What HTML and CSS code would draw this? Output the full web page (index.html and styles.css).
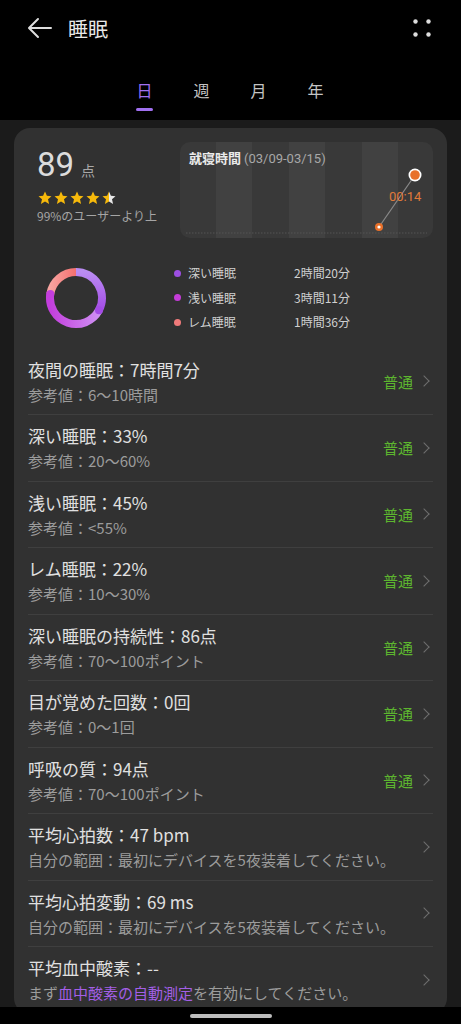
FILE: index.html
```html
<!DOCTYPE html>
<html>
<head>
    <meta name="viewport" content="width=device-width, initial-scale=1.0">
    <link rel="stylesheet" href="styles.css">
</head>
<body>
    <!-- Top bar -->
    <div class="topbar">
        <svg class="back" width="26" height="22" viewBox="0 0 26 22">
            <path d="M24 11H3M11 2L2 11l9 9" fill="none" stroke="#ddd" stroke-width="2" stroke-linecap="round" stroke-linejoin="round"/>
        </svg>
        <div class="title">睡眠</div>
        <svg class="more" width="18" height="18" viewBox="0 0 18 18">
            <circle cx="2.5" cy="2.5" r="2.2" fill="#ddd"/>
            <circle cx="15.5" cy="2.5" r="2.2" fill="#ddd"/>
            <circle cx="2.5" cy="15.5" r="2.2" fill="#ddd"/>
            <circle cx="15.5" cy="15.5" r="2.2" fill="#ddd"/>
        </svg>
    </div>

    <div class="tabs">
        <div class="tab active">日</div>
        <div class="tab">週</div>
        <div class="tab">月</div>
        <div class="tab">年</div>
    </div>

    <div class="page">
        <div class="card">
            <div class="summary">
                <div class="score">
                    <div class="score-num">89<span class="score-unit">点</span></div>
                    <svg class="stars" width="80" height="15" viewBox="0 0 80 15">
                        <defs>
                            <linearGradient id="half">
                                <stop offset="50%" stop-color="#f6b90b"/>
                                <stop offset="50%" stop-color="#e8e8e8"/>
                            </linearGradient>
                            <path id="star" d="M7 0.5l1.9 4.3 4.6 0.4-3.5 3.1 1.1 4.6L7 10.5l-4.1 2.4 1.1-4.6L0.5 5.2l4.6-0.4z"/>
                        </defs>
                        <use href="#star" x="0" fill="#f6b90b"/>
                        <use href="#star" x="16" fill="#f6b90b"/>
                        <use href="#star" x="32" fill="#f6b90b"/>
                        <use href="#star" x="48" fill="#f6b90b"/>
                        <use href="#star" x="64" fill="url(#half)"/>
                    </svg>
                    <div class="rank">99%のユーザーより上</div>
                </div>
                <div class="bedtime">
                    <svg class="bedtime-chart" width="253" height="96" viewBox="0 0 253 96">
                        <rect x="36" y="0" width="36" height="96" fill="#414141"/>
                        <rect x="109" y="0" width="36" height="96" fill="#414141"/>
                        <rect x="182" y="0" width="36" height="96" fill="#414141"/>
                        <line x1="6" y1="91" x2="247" y2="91" stroke="#555" stroke-width="1" stroke-dasharray="1.5 1.5"/>
                        <line x1="199" y1="85" x2="235" y2="33" stroke="#8a8a8a" stroke-width="1.2"/>
                        <circle cx="199" cy="85" r="4" fill="#e8702a"/>
                        <circle cx="199" cy="85" r="1.6" fill="#fff"/>
                        <circle cx="235" cy="33" r="6.5" fill="#fff"/>
                        <circle cx="235" cy="33" r="4.8" fill="#e8702a"/>
                    </svg>
                    <div class="bedtime-title">就寝時間 <span>(03/09-03/15)</span></div>
                    <div class="bedtime-time">00:14</div>
                </div>
            </div>

            <div class="stages">
                <svg class="donut" width="62" height="62" viewBox="0 0 62 62">
                    <defs>
                        <linearGradient id="gDeep" x1="0" y1="0" x2="0" y2="1">
                            <stop offset="0" stop-color="#ba8cf3"/>
                            <stop offset="1" stop-color="#a44ce6"/>
                        </linearGradient>
                        <linearGradient id="gLight" x1="1" y1="0" x2="0" y2="0">
                            <stop offset="0" stop-color="#cf90f3"/>
                            <stop offset="1" stop-color="#c33edd"/>
                        </linearGradient>
                        <linearGradient id="gRem" x1="0" y1="0" x2="1" y2="0">
                            <stop offset="0" stop-color="#f8a4a0"/>
                            <stop offset="1" stop-color="#f47070"/>
                        </linearGradient>
                    </defs>
                    <g fill="none" stroke-width="8">
                        <path d="M5.31 26.93A26 26 0 0 1 31 5" stroke="url(#gRem)"/>
                        <path d="M53.96 43.2A26 26 0 0 1 5.31 26.93" stroke="url(#gLight)"/>
                        <circle cx="5.31" cy="26.93" r="4" fill="#c33edd" stroke="none"/>
                        <path d="M31 5A26 26 0 0 1 53.96 43.2" stroke="url(#gDeep)"/>
                        <circle cx="53.96" cy="43.2" r="4" fill="#a44ce6" stroke="none"/>
                    </g>
                </svg>
                <div class="legend">
                    <div class="legend-row"><span class="dot deep"></span><span class="legend-name">深い睡眠</span><span>2時間20分</span></div>
                    <div class="legend-row"><span class="dot light"></span><span class="legend-name">浅い睡眠</span><span>3時間11分</span></div>
                    <div class="legend-row"><span class="dot rem"></span><span class="legend-name">レム睡眠</span><span>1時間36分</span></div>
                </div>
            </div>

            <div class="list">
                <div class="item">
                    <div class="item-text">
                        <div class="item-title">夜間の睡眠：7時間7分</div>
                        <div class="item-sub">参考値：6～10時間</div>
                    </div>
                    <span class="status">普通</span>
                    <span class="chev"></span>
                </div>
                <div class="item">
                    <div class="item-text">
                        <div class="item-title">深い睡眠：33%</div>
                        <div class="item-sub">参考値：20～60%</div>
                    </div>
                    <span class="status">普通</span>
                    <span class="chev"></span>
                </div>
                <div class="item">
                    <div class="item-text">
                        <div class="item-title">浅い睡眠：45%</div>
                        <div class="item-sub">参考値：&lt;55%</div>
                    </div>
                    <span class="status">普通</span>
                    <span class="chev"></span>
                </div>
                <div class="item">
                    <div class="item-text">
                        <div class="item-title">レム睡眠：22%</div>
                        <div class="item-sub">参考値：10～30%</div>
                    </div>
                    <span class="status">普通</span>
                    <span class="chev"></span>
                </div>
                <div class="item">
                    <div class="item-text">
                        <div class="item-title">深い睡眠の持続性：86点</div>
                        <div class="item-sub">参考値：70～100ポイント</div>
                    </div>
                    <span class="status">普通</span>
                    <span class="chev"></span>
                </div>
                <div class="item">
                    <div class="item-text">
                        <div class="item-title">目が覚めた回数：0回</div>
                        <div class="item-sub">参考値：0～1回</div>
                    </div>
                    <span class="status">普通</span>
                    <span class="chev"></span>
                </div>
                <div class="item">
                    <div class="item-text">
                        <div class="item-title">呼吸の質：94点</div>
                        <div class="item-sub">参考値：70～100ポイント</div>
                    </div>
                    <span class="status">普通</span>
                    <span class="chev"></span>
                </div>
                <div class="item">
                    <div class="item-text">
                        <div class="item-title">平均心拍数：47 bpm</div>
                        <div class="item-sub">自分の範囲：最初にデバイスを5夜装着してください。</div>
                    </div>
                    <span class="chev"></span>
                </div>
                <div class="item">
                    <div class="item-text">
                        <div class="item-title">平均心拍変動：69 ms</div>
                        <div class="item-sub">自分の範囲：最初にデバイスを5夜装着してください。</div>
                    </div>
                    <span class="chev"></span>
                </div>
                <div class="item">
                    <div class="item-text">
                        <div class="item-title">平均血中酸素：--</div>
                        <div class="item-sub">まず<span class="link">血中酸素の自動測定</span>を有効にしてください。</div>
                    </div>
                    <span class="chev"></span>
                </div>
            </div>
        </div>
    </div>

    <div class="navbar"><div class="home-bar"></div></div>
</body>
</html>
```
FILE: styles.css
```css
body {
    margin: 0;
    background: #000;
    font-family: "Noto Sans CJK JP", "Noto Sans", sans-serif;
    color: #e6e6e6;
    height: 1024px;
    overflow: hidden;
}
.topbar {
    height: 56px;
    display: flex;
    align-items: center;
    padding: 0 30px 0 27px;
}
.back {
    margin-right: 15px;
}
.title {
    font-size: 20px;
    color: #e8e8e8;
    flex: 1;
}
.tabs {
    height: 64px;
    display: flex;
    padding-left: 116px;
    align-items: flex-start;
}
.tab {
    width: 57px;
    text-align: center;
    font-size: 16px;
    line-height: 22px;
    color: #c4c4c4;
    margin-top: 23px;
}
.tab.active {
    color: #a070f0;
}
.tab.active::after {
    content: "";
    display: block;
    width: 17px;
    height: 2.5px;
    border-radius: 2px;
    background: #a070f0;
    margin: 7px auto 0;
}
.page {
    background: #1b1b1b;
    padding: 8px 14px 0;
}
.card {
    background: #313131;
    border-radius: 16px;
    padding: 14px 14px 0;
}
.summary {
    display: flex;
    justify-content: space-between;
}
.score {
    padding-left: 9px;
}
.score-num {
    font-family: Roboto, "Noto Sans", sans-serif;
    font-size: 33px;
    line-height: 36px;
    margin-top: 5px;
    color: #dcdcdc;
}
.score-unit {
    font-family: "Noto Sans CJK JP", sans-serif;
    font-size: 14px;
    color: #a8a8a8;
    margin-left: 7px;
}
.stars {
    display: block;
    margin: 3px 0 0 1px;
}
.rank {
    font-size: 12px;
    color: #a5a5a5;
    margin-top: 1px;
}
.bedtime {
    position: relative;
    width: 253px;
    height: 96px;
    background: #393939;
    border-radius: 10px;
    overflow: hidden;
}
.bedtime-chart {
    position: absolute;
    left: 0;
    top: 0;
}
.bedtime-title {
    position: relative;
    font-size: 13px;
    font-weight: bold;
    color: #eaeaea;
    padding: 6px 0 0 9px;
}
.bedtime-title span {
    font-family: Roboto, sans-serif;
    font-weight: normal;
    color: #a8a8a8;
}
.bedtime-time {
    position: absolute;
    left: 209px;
    top: 47px;
    font-family: Roboto, sans-serif;
    font-size: 13px;
    color: #e07a3a;
}
.stages {
    display: flex;
    align-items: center;
    padding: 23px 0 14px 17px;
}
.donut {
    margin-right: 67px;
}
.legend-row {
    display: flex;
    align-items: center;
    font-size: 12px;
    line-height: 24.5px;
    color: #d0d0d0;
}
.dot {
    width: 7px;
    height: 7px;
    border-radius: 50%;
    margin-right: 7px;
}
.dot.deep {
    background: #9d4fe2;
}
.dot.light {
    background: #c43cd8;
}
.dot.rem {
    background: #f07a7a;
}
.legend-name {
    width: 106px;
}
.item {
    display: flex;
    align-items: center;
    height: 66.5px;
    border-bottom: 1px solid #3f3f3f;
    box-sizing: border-box;
}
.item-text {
    flex: 1;
}
.item-title {
    font-size: 17px;
    line-height: 23px;
    color: #e0e0e0;
}
.item-sub {
    font-size: 15px;
    line-height: 21px;
    color: #9c9c9c;
    margin-top: 3px;
}
.link {
    color: #a35fe6;
}
.status {
    font-size: 15px;
    color: #5db52f;
    margin-right: 7px;
}
.chev {
    width: 7px;
    height: 7px;
    border-top: 1.5px solid #6e6e6e;
    border-right: 1.5px solid #6e6e6e;
    transform: rotate(45deg);
    margin-right: 5px;
}
.navbar {
    position: fixed;
    left: 0;
    right: 0;
    bottom: 0;
    height: 17px;
    background: #000;
    display: flex;
    justify-content: center;
    align-items: center;
}
.home-bar {
    width: 82px;
    height: 4px;
    border-radius: 2px;
    background: #bdbdbd;
}
```
